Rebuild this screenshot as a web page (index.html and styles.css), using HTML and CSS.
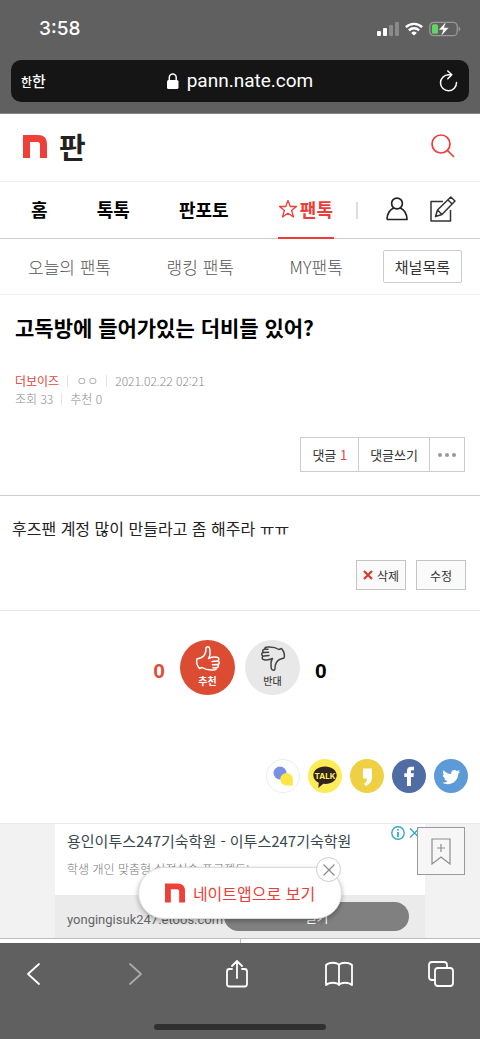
FILE: index.html
```html
<!DOCTYPE html>
<html lang="ko">
<head>
<meta charset="utf-8">
<meta name="viewport" content="width=device-width, initial-scale=1">
<title>고독방에 들어가있는 더비들 있어?</title>
<link rel="stylesheet" href="styles.css">
</head>
<body>
<div class="browser-top">
  <div class="status">
    <span class="time">3:58</span>
    <div class="status-icons">
      <svg width="22" height="14" viewBox="0 0 22 14"><g fill="#fff"><rect y="9" width="4" height="5" rx="1"/><rect x="6" y="6" width="4" height="8" rx="1"/></g><g fill="#8a8a8a"><rect x="12" y="3" width="4" height="11" rx="1"/><rect x="18" y="0" width="4" height="14" rx="1"/></g></svg>
      <svg width="18" height="14" viewBox="0 0 18 14" fill="none" stroke="#fff" stroke-width="2.4"><path d="M.9 5.2a11.6 11.6 0 0 1 16.2 0M3.9 8.4a7.3 7.3 0 0 1 10.2 0"/><path d="M9 13.6 6.2 10.9a4 4 0 0 1 5.6 0z" fill="#fff" stroke="none"/></svg>
      <svg width="32" height="16" viewBox="0 0 32 16"><rect x=".8" y="1.3" width="27.4" height="13.4" rx="4" fill="none" stroke="#999" stroke-width="1.3"/><path d="M29.6 5.5v5q1.8-.8 1.8-2.500t-1.800-2.500" fill="#999"/><rect x="3" y="3.300" width="6" height="9.400" rx="1.500" fill="#63d364"/><path d="M17.500 0 9.500 9h4.500l-2.500 7 8.500-9.500h-4.700z" fill="#fff" stroke="#606060" stroke-width=".6"/></svg>
    </div>
  </div>
  <div class="address">
    <button class="plain text-size" aria-label="글자 크기"><small>한</small>한</button>
    <span class="host"><svg width="12" height="17" viewBox="0 0 12 17"><rect x="0" y="7" width="11.500" height="9" rx="1.600" fill="#fff"/><path d="M2.300 8V4.500a3.450 3.450 0 0 1 6.900 0V8" fill="none" stroke="#fff" stroke-width="1.500"/></svg>pann.nate.com</span>
    <button class="plain reload" aria-label="새로고침"><svg width="20" height="23" viewBox="0 0 20 23" fill="none" stroke="#fff" stroke-width="1.500" stroke-linecap="round" stroke-linejoin="round"><path d="M17.500 12.500A8 8 0 1 1 9.500 4.800h3.300M8.800 1l4 3.800-4 4"/></svg></button>
  </div>
</div>

<header class="site">
  <a class="logo" href="#"><svg width="24" height="23" viewBox="0 0 24 23"><path d="M0 0h15q9 0 9 9v14h-7V9.500Q17 7 14.500 7H7v16H0z" fill="#ee4038"/></svg><span>판</span></a>
  <button class="plain" aria-label="검색"><svg width="24" height="24" viewBox="0 0 24 24" fill="none" stroke="#ee3d37" stroke-width="1.700"><circle cx="10" cy="10" r="9"/><path d="m16 16 7 7"/></svg></button>
</header>
<nav class="tabs">
  <ul>
    <li><a href="#">홈</a></li>
    <li><a href="#">톡톡</a></li>
    <li><a href="#">판포토</a></li>
    <li><a class="active" href="#"><svg width="20" height="20" viewBox="0 0 20 20" fill="none" stroke="#ee3d37" stroke-width="1.300" stroke-linejoin="round"><path d="m10 1.500 2.300 6h6.200l-4.900 4 1.900 6.500L10 14.200 4.500 18l1.900-6.500-4.900-4h6.200z"/></svg>팬톡</a></li>
  </ul>
  <span class="divider"></span>
  <a class="tool" href="#" aria-label="내 정보"><svg width="22" height="24" viewBox="0 0 22 24" fill="none" stroke="#222" stroke-width="1.700" stroke-linejoin="round"><circle cx="11" cy="6.500" r="5.400"/><path d="M1 22.500c0-6.500 3.500-10.500 7-11.500M14 11c3.500 1 7 5 7 11.500H1"/></svg></a>
  <a class="tool" href="#" aria-label="글쓰기"><svg width="26" height="26" viewBox="0 0 26 26" fill="none" stroke="#333" stroke-width="1.500" stroke-linejoin="round"><path d="M13 5.500H1V25h19.500V14"/><path d="m5.500 20.500 2-6.500L20.800 1l4.200 4-13 13.500zM7.500 14l4.500 4.500M18 4l4.200 4"/></svg></a>
</nav>
<nav class="subtabs">
  <div class="subtab-links"><a href="#">오늘의 팬톡</a><a href="#">랭킹 팬톡</a><a href="#">MY팬톡</a></div>
  <button class="channels">채널목록</button>
</nav>

<main>
  <section class="head">
    <h1>고독방에 들어가있는 더비들 있어?</h1>
    <div class="meta"><a href="#">더보이즈</a><span>ㅇㅇ</span><span>2021.02.22 02:21</span></div>
    <div class="meta"><span>조회 33</span><span>추천 0</span></div>
    <div class="actions"><button>댓글 <em>1</em></button><button>댓글쓰기</button><button class="more" aria-label="더보기"><i></i><i></i><i></i></button></div>
  </section>
  <section class="content">
    <p>후즈팬 계정 많이 만들라고 좀 해주라 ㅠㅠ</p>
    <div class="edit"><button><svg width="10" height="10" viewBox="0 0 10 10" stroke="#d83a30" stroke-width="2.200"><path d="m1 1 8 8M9 1 1 9"/></svg>삭제</button><button>수정</button></div>
  </section>
  <section class="votes">
    <b class="up-count">0</b>
    <button class="vote up"><svg width="24" height="25" viewBox="0 0 24 25"><path d="M1 13l4-1.200C9 10 10 7 10 2.500 10 0 13.500.3 13.800 3L14 8q0 2-1.500 4.500M12.500 12.500Q17 10.500 21 11.300c2.700.5 2.300 3.600 0 3.700l-5 .4M22 15c2 1 1.500 3.500-.5 3.600l-5 .2M21.500 18.600c1.700.9.700 2.900-1 3.100l-3.500.1M20 21.800c.8 1.400-.5 2.200-2.500 2.200-4.500.3-8.500-.5-11.500-2.500l-2.500 1M1 13c-1 3 0 6.500 2.500 9.500"/></svg><span>추천</span></button>
    <button class="vote down"><svg width="24" height="25" viewBox="0 0 24 25"><g transform="rotate(180 12 12.500)"><path d="M1 13l4-1.200C9 10 10 7 10 2.500 10 0 13.500.3 13.800 3L14 8q0 2-1.500 4.500M12.500 12.500Q17 10.500 21 11.300c2.700.5 2.300 3.600 0 3.700l-5 .4M22 15c2 1 1.500 3.500-.5 3.600l-5 .2M21.500 18.600c1.700.9.700 2.900-1 3.100l-3.500.1M20 21.800c.8 1.400-.5 2.200-2.500 2.200-4.500.3-8.500-.5-11.500-2.500l-2.500 1M1 13c-1 3 0 6.500 2.500 9.500"/></g></svg><span>반대</span></button>
    <b>0</b>
  </section>
  <div class="share">
    <a href="#" aria-label="채팅 공유"><svg viewBox="0 0 34 34"><circle cx="17" cy="17" r="16.500" fill="#fff" stroke="#ececec"/><circle cx="14" cy="14" r="6.500" fill="#7891e5"/><path d="M20.500 14a6.300 6.300 0 0 1 6.300 6.300v6.200h-6.300a6.250 6.250 0 0 1 0-12.500" fill="#fde543"/></svg></a>
    <a href="#" aria-label="카카오톡 공유"><svg viewBox="0 0 34 34"><circle cx="17" cy="17" r="17" fill="#fdec58"/><path d="M17 7.500c-6.600 0-11.700 3.700-11.700 8.700 0 3.300 2.200 6 5.500 7.500L10.300 29l5-4.200c7.500.8 13.400-3 13.400-8.600 0-5-5.100-8.700-11.700-8.700" fill="#31231f"/><text class="talk" x="17" y="19.500" text-anchor="middle">TALK</text></svg></a>
    <a href="#" aria-label="카카오스토리 공유"><svg viewBox="0 0 34 34"><circle cx="17" cy="17" r="17" fill="#f0d043"/><path d="M13 9.500h9v8.500c0 4.500-2.500 7.500-6 9l-2.200-2c2.200-1.300 3.200-3 3.200-5.500h-4z" fill="#fff"/></svg></a>
    <a href="#" aria-label="페이스북 공유"><svg viewBox="0 0 34 34"><circle cx="17" cy="17" r="17" fill="#4f6ca5"/><path d="M15 27v-9h-2.700v-3.800H15v-2.500C15 9 16.700 7.700 19 7.700h3v3.600h-1.800c-1 0-1.300.4-1.300 1.300v1.600h3l-.4 3.800h-2.600v9z" fill="#fff"/></svg></a>
    <a href="#" aria-label="트위터 공유"><svg viewBox="0 0 34 34"><circle cx="17" cy="17" r="17" fill="#5c9bd7"/><path d="M9.500 11.200c2 2.400 4.700 3.700 7.700 3.900-.7-3.200 3-5.400 5.800-3 1-.2 1.800-.5 2.600-1-.3 1-.9 1.600-1.600 2.100.8-.1 1.500-.3 2.200-.6-.5.8-1.200 1.500-2 2.100.3 7.500-8 13.200-15.800 9 2 .1 3.900-.4 5.300-1.600-1.700-.1-3-1.200-3.500-2.600h1.500c-1.700-.5-2.900-2-2.900-3.700l1.600.4c-1.500-1-2-3.200-.9-5" fill="#fff"/></svg></a>
  </div>
  <aside class="ad">
    <div class="card">
      <div class="card-text">
        <a class="ad-title" href="#">용인이투스247기숙학원 - 이투스247기숙학원</a>
        <p>학생 개인 맞춤형 실전실습 프로젝트!</p>
        <svg class="ad-mark" width="29" height="14" viewBox="0 0 29 14" fill="none" stroke="#38a5cb" stroke-width="1.400"><circle cx="7" cy="7" r="6.200"/><path d="M7 6v5M7 3v1.600" stroke-width="1.800"/><path d="m19 2.500 9 9M28 2.500l-9 9"/></svg>
      </div>
      <div class="card-foot"><span>yongingisuk247.etoos.com</span><button>열기</button></div>
    </div>
    <button class="bookmark" aria-label="북마크 추가"><svg width="20" height="27" viewBox="0 0 20 27" fill="none" stroke="#8d8d8d" stroke-width="1.200"><path d="M1 26V1h18v25l-9-7z"/><path d="M6 10h8M10 6v8"/></svg></button>
    <div class="app-pill">
      <a href="#"><svg width="20" height="20" viewBox="0 0 24 23"><path d="M0 0h15q9 0 9 9v14h-7V9.500Q17 7 14.500 7H7v16H0z" fill="#ee4038"/></svg>네이트앱으로 보기</a>
      <button class="pill-close" aria-label="닫기"><svg width="12" height="12" viewBox="0 0 12 12" stroke="#888" stroke-width="1.100"><path d="m.5.5 11 11M11.500.5l-11 11"/></svg></button>
    </div>
  </aside>
  <div class="next-row"><span></span><span></span></div>
</main>

<footer class="browser-bottom">
  <div class="toolbar">
    <button class="plain" aria-label="뒤로"><svg width="26" height="28" viewBox="0 0 26 28"><path d="M18 4 7 14l11 10"/></svg></button>
    <button class="plain dim" aria-label="앞으로"><svg width="26" height="28" viewBox="0 0 26 28"><path d="m8 4 11 10L8 24"/></svg></button>
    <button class="plain" aria-label="공유"><svg width="26" height="28" viewBox="0 0 26 28"><path d="M8 9H5.500Q3 9 3 11.500V24q0 2.500 2.500 2.500h15Q23 26.500 23 24V11.500Q23 9 20.500 9H18M13 18V1.500M8 6l5-5 5 5"/></svg></button>
    <button class="plain" aria-label="책갈피"><svg width="28" height="28" viewBox="0 0 28 28"><path d="M14 25V5c-2-3-10-3-13 0v20c3-3 11-3 13 0 2-3 10-3 13 0V5c-3-3-11-3-13 0"/></svg></button>
    <button class="plain" aria-label="탭"><svg width="26" height="28" viewBox="0 0 26 28"><rect x="7" y="8" width="18" height="18" rx="3"/><path d="M7 20H4q-3 0-3-3V5q0-3 3-3h12q3 0 3 3v3"/></svg></button>
  </div>
  <div class="home-bar"></div>
</footer>
</body>
</html>
```
FILE: styles.css
```css
* { box-sizing: border-box; }
body {
  margin: 0;
  min-height: 100vh;
  display: flex;
  flex-direction: column;
  background: #fff;
  color: #222;
  font-family: "Noto Sans CJK KR", sans-serif;
  font-size: 16px;
}
a { color: inherit; text-decoration: none; }
button { font: inherit; color: inherit; margin: 0; padding: 0; cursor: pointer; }
svg { display: block; flex: none; }
.plain { border: 0; background: none; }

.browser-top { background: #606060; padding: 18px 11px 11px; border-bottom: 1px solid #858585; color: #fff; }
.status { display: flex; justify-content: space-between; align-items: center; height: 22px; padding: 0 8px 0 28px; }
.time { font: 500 19px/22px Inter, sans-serif; }
.status-icons { display: flex; align-items: center; gap: 6px; }
.address {
  display: grid;
  grid-template-columns: 60px 1fr 60px;
  align-items: center;
  height: 42px;
  margin-top: 20px;
  padding: 0 10px;
  border-radius: 10px;
  background: #151515;
}
.text-size { text-align: left; font-size: 15px; font-weight: 500; line-height: 20px; }
.text-size small { font-size: 12px; }
.host { display: flex; justify-content: center; align-items: center; gap: 8px; font: 400 19px/24px Roboto, sans-serif; }
.reload { justify-self: end; }

.site { display: flex; justify-content: space-between; align-items: center; height: 67px; padding: 0 25px 3px 23px; }
.logo { display: flex; align-items: center; gap: 12px; font-size: 29px; font-weight: 700; line-height: 40px; }
.tabs { display: flex; align-items: center; height: 58px; padding: 0 24px 0 31px; border-top: 1px solid #eee; border-bottom: 1px solid #ccc; }
.tabs ul { flex: 1; display: flex; justify-content: space-between; margin: 0; padding: 0; list-style: none; }
.tabs li a { display: flex; align-items: center; height: 58px; padding-bottom: 2px; color: #000; font-size: 18px; font-weight: 700; }
.tabs li .active { gap: 2px; padding-right: 1px; border-bottom: 2px solid #ee3d37; border-top: 2px solid transparent; color: #ee3d37; }
.divider { width: 2px; height: 17px; margin: 0 28px 0 22px; background: #ddd; }
.tool { padding-bottom: 2px; }
.tool + .tool { margin-left: 22px; }
.subtabs { display: flex; align-items: center; gap: 40px; height: 56px; padding: 0 18px 0 28px; border-bottom: 1px solid #eee; }
.subtab-links { flex: 1; display: flex; justify-content: space-between; color: #555; font-size: 17px; font-weight: 300; }
.channels { height: 33px; padding: 0 11px; border: 1px solid #ccc; border-radius: 2px; background: #fff; color: #333; font-size: 15px; line-height: 29px; }

.head { padding: 15px 15px 23px; border-bottom: 1px solid #ccc; }
h1 { margin: 0 0 28px; color: #000; font-size: 21px; font-weight: 700; line-height: 34px; }
.meta { display: flex; color: #888; font-size: 12px; font-weight: 300; line-height: 18px; }
.meta a { color: #e0463e; font-weight: 400; }
.meta > * + * { display: flex; align-items: center; }
.meta > * + *::before { content: ""; width: 1px; height: 12px; margin: 0 8px; background: #e5e5e5; }
.actions { display: flex; justify-content: flex-end; margin-top: 29px; }
.actions button { height: 35px; padding: 0 11px; border: 1px solid #ccc; background: #fff; color: #333; font-size: 13px; line-height: 30px; }
.actions button + button { margin-left: -1px; }
.actions em { color: #e0463e; font-style: normal; }
.actions .more { display: flex; align-items: center; gap: 3px; padding: 0 8px; }
.more i { width: 4px; height: 4px; border-radius: 50%; background: #999; }

.content { padding: 19px 14px 20px 12px; border-bottom: 1px solid #e8e8e8; }
.content p { margin: 0; font-size: 16px; line-height: 26px; }
.edit { display: flex; justify-content: flex-end; gap: 10px; margin-top: 19px; }
.edit button { display: flex; align-items: center; justify-content: center; gap: 4px; width: 50px; height: 30px; border: 1px solid #c4c4c4; background: #fafafa; color: #333; font-size: 12px; }

.votes { display: flex; justify-content: center; align-items: center; gap: 10px; padding: 29px 0 0; }
.votes b { margin: 6px 5px 0; font-family: "Liberation Sans", sans-serif; font-size: 21px; line-height: 24px; color: #000; }
.votes .up-count { color: #db4f38; }
.vote { display: flex; flex-direction: column; align-items: center; width: 55px; height: 55px; padding-top: 6px; border: 0; border-radius: 50%; font-size: 10px; line-height: 14px; }
.vote svg { fill: none; stroke: currentColor; stroke-width: 1.5; stroke-linecap: round; stroke-linejoin: round; overflow: visible; }
.vote span { margin-top: 3px; }
.up { background: #db4c33; color: #fff; font-weight: 700; }
.down { background: #e8e8e8; color: #444; font-weight: 500; }
.share { display: flex; justify-content: flex-end; gap: 8px; padding: 64px 12px 30px; }
.share svg { width: 34px; height: 34px; }
.talk { fill: #fdec58; font: 700 8px Inter, sans-serif; }

.ad { position: relative; padding: 0 55px; background: #f2f2f2; border-top: 1px solid #ebebeb; }
.card { position: relative; background: #fff; }
.card-text { height: 71px; padding: 5px 12px 0; }
.ad-title { display: block; color: #37474f; font-size: 15px; line-height: 24px; white-space: nowrap; }
.card-text p { margin: 7px 0 0; color: #777; font-size: 12px; line-height: 18px; font-weight: 300; }
.ad-mark { position: absolute; top: 2px; right: 5px; }
.card-foot { display: flex; align-items: center; gap: 1px; height: 43px; padding: 0 16px 0 12px; background: #ebebeb; }
.card-foot span { padding-top: 6px; color: #666; font: 400 13px/18px Roboto, sans-serif; }
.card-foot button { flex: 1; height: 29px; border: 0; border-radius: 15px; background: #808080; color: #fff; font-size: 13px; line-height: 24px; }
.bookmark { position: absolute; top: 3px; right: 15px; display: grid; place-items: center; width: 48px; height: 48px; border: 1px solid #999; background: rgba(246, 246, 246, .9); }
.app-pill { position: absolute; top: 43px; left: 50%; width: 204px; margin-left: -102px; border: 1px solid #ddd; border-radius: 26px; background: #fff; box-shadow: 0 2px 5px rgba(0, 0, 0, .3); }
.app-pill a { display: flex; align-items: center; justify-content: center; gap: 8px; height: 50px; color: #ee3d37; font-size: 16px; }
.pill-close { position: absolute; top: -11px; right: 0; display: grid; place-items: center; width: 25px; height: 25px; border: 1px solid #ccc; border-radius: 50%; background: #fff; }
.next-row { display: flex; height: 5px; }
.next-row span { flex: 1; border-top: 1px solid #bbb; }
.next-row span + span { border-left: 1px solid #bbb; }

.browser-bottom { flex: 1; display: flex; flex-direction: column; justify-content: space-between; background: #606060; padding: 17px 0 9px; }
.toolbar { display: flex; justify-content: space-between; padding: 0 26px 0 21px; }
.toolbar svg { fill: none; stroke: #fff; stroke-width: 1.8; stroke-linecap: round; stroke-linejoin: round; }
.toolbar .dim svg { stroke: #aaa; }
.home-bar { align-self: center; width: 172px; height: 6px; border-radius: 3px; background: #303030; }
```
